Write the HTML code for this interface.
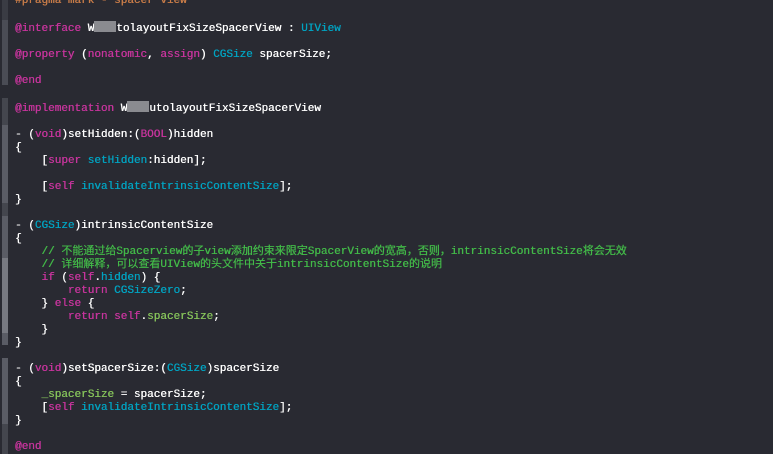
<!DOCTYPE html>
<html><head><meta charset="utf-8"><style>
body{margin:0;width:773px;height:454px;overflow:hidden;background:#292a32;}
.g{position:absolute;left:2px;width:6px;}
pre{position:absolute;left:15px;top:-5px;margin:0;font-family:"Liberation Mono","Noto Sans CJK SC",monospace;font-size:11px;line-height:13px;color:#fff;text-shadow:0.35px 0 0 currentColor;}
.k{color:#c6349c}.t{color:#01a2c0}.c{color:#42b848}.p{color:#c67b48}.v{color:#85c25a}.m{color:#01a2c0}
.b{display:inline-block;width:22px;height:11px;background:#8a8b90;vertical-align:-1px;}
</style></head><body>
<div class="g" style="top:0;height:20px;background:#3a3c44"></div>
<div class="g" style="top:20px;height:65px;background:#4a4c55"></div>
<div class="g" style="top:98px;height:27px;background:#44464e"></div>
<div class="g" style="top:125px;height:78px;background:#5a5c65"></div>
<div class="g" style="top:203px;height:13px;background:#44464e"></div>
<div class="g" style="top:216px;height:42px;background:#5a5c65"></div>
<div class="g" style="top:258px;height:75px;background:#777981"></div>
<div class="g" style="top:333px;height:12px;background:#5a5c65"></div>
<div class="g" style="top:358px;height:66px;background:#5a5c65"></div>
<div class="g" style="top:424px;height:30px;background:#44464e"></div>
<pre><span class="p">#pragma mark - spacer view</span>

<span class="k">@interface</span> W<span class="b"></span>tolayoutFixSizeSpacerView : <span class="t">UIView</span>

<span class="k">@property</span> (<span class="k">nonatomic</span>, <span class="k">assign</span>) <span class="t">CGSize</span> spacerSize;

<span class="k">@end</span>

<span class="k">@implementation</span> W<span class="b"></span>utolayoutFixSizeSpacerView

- (<span class="k">void</span>)setHidden:(<span class="k">BOOL</span>)hidden
{
    [<span class="k">super</span> <span class="m">setHidden</span>:hidden];

    [<span class="k">self</span> <span class="m">invalidateIntrinsicContentSize</span>];
}

- (<span class="t">CGSize</span>)intrinsicContentSize
{
    <span class="c">// 不能通过给Spacerview的子view添加约束来限定SpacerView的宽高，否则，intrinsicContentSize将会无效</span>
    <span class="c">// 详细解释，可以查看UIView的头文件中关于intrinsicContentSize的说明</span>
    <span class="k">if</span> (<span class="k">self</span>.<span class="m">hidden</span>) {
        <span class="k">return</span> <span class="t">CGSizeZero</span>;
    } <span class="k">else</span> {
        <span class="k">return</span> <span class="k">self</span>.<span class="v">spacerSize</span>;
    }
}

- (<span class="k">void</span>)setSpacerSize:(<span class="t">CGSize</span>)spacerSize
{
    <span class="v">_spacerSize</span> = spacerSize;
    [<span class="k">self</span> <span class="m">invalidateIntrinsicContentSize</span>];
}

<span class="k">@end</span></pre>
</body></html>
